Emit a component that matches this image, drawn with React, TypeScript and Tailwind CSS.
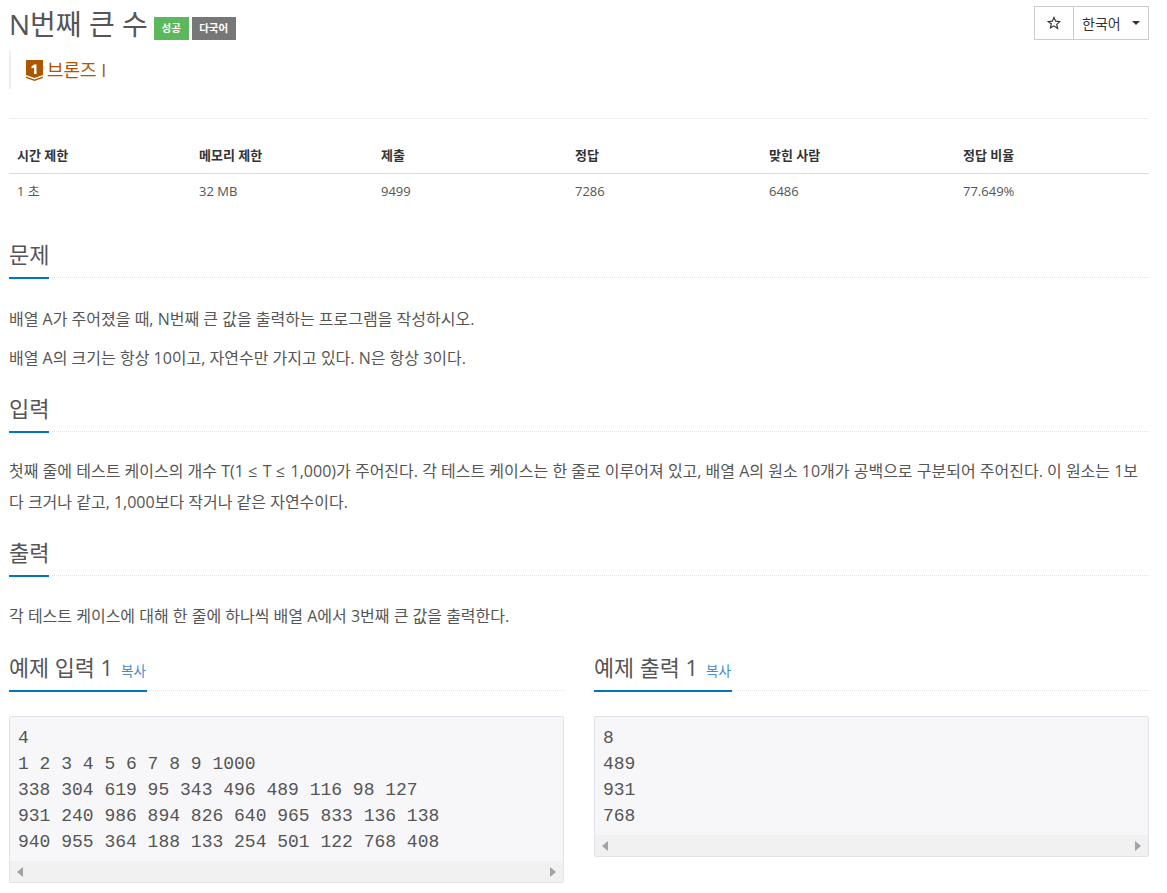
const sans = "font-['Open_Sans','Noto_Sans_CJK_KR',sans-serif]";

function Headline({ children }: { children: React.ReactNode }) {
  return (
    <div className="border-b border-dotted border-[#e5e5e5] h-[40px] flex">
      <h2 className="inline-block border-b-2 border-[#0076c0] h-[41px] text-[22px] leading-[32px] text-[#555] font-normal whitespace-nowrap">
        {children}
      </h2>
    </div>
  );
}

function Sample({ title, text, className }: { title: string; text: string; className?: string }) {
  return (
    <div className={className}>
      <div className="border-b border-dotted border-[#e5e5e5] h-[37px]">
        <div className="inline-flex items-baseline border-b-2 border-[#0076c0] h-[38px] pr-[1px] text-[#555] text-[21.8px] leading-[27px] whitespace-nowrap">
          {title}
          <span className="text-[13.5px] text-[#428bca] ml-[8px]">복사</span>
        </div>
      </div>
      <div className="mt-[25px] border border-[#e1e1e8] bg-[#f7f7f9] rounded-[2px]">
        <pre className="font-['Liberation_Mono',monospace] text-[18px] leading-[26px] text-[#555] px-[8px] pt-[8px] pb-[6px] whitespace-pre">
          {text}
        </pre>
        <div className="h-[21px] bg-[#f1f1f1] flex items-center justify-between px-[7px]">
          <svg width="6" height="10" viewBox="0 0 6 10"><path d="M6 0v10L0 5z" fill="#a3a3a3" /></svg>
          <svg width="6" height="10" viewBox="0 0 6 10"><path d="M0 0v10l6-5z" fill="#a3a3a3" /></svg>
        </div>
      </div>
    </div>
  );
}

export default function App() {
  const heads = [
    ["시간 제한", "w-[182px]"],
    ["메모리 제한", "w-[182px]"],
    ["제출", "w-[194px]"],
    ["정답", "w-[194px]"],
    ["맞힌 사람", "w-[194px]"],
    ["정답 비율", "flex-1"],
  ];
  const vals = ["1 초", "32 MB", "9499", "7286", "6486", "77.649%"];
  return (
    <div className={`${sans} bg-white min-h-[893px] pl-[9px] pr-[18px] text-[16px] text-[#555] overflow-hidden`}>
      <div className="flex items-start justify-between pt-[6px] h-[51px]">
        <div className="flex items-center">
          <span className="text-[28px] leading-[36px] text-[#555]">N번째 큰 수</span>
          <span className="ml-[6px] mt-[9px] w-[35px] h-[23px] flex items-center justify-center bg-[#5cb85c] text-white text-[10.5px] font-bold">성공</span>
          <span className="ml-[3px] mt-[9px] w-[44px] h-[23px] flex items-center justify-center bg-[#777] text-white text-[10.5px] font-bold">다국어</span>
        </div>
        <div className="flex h-[34px] border border-[#ccc] text-[14px] text-[#333]">
          <div className="w-[39px] flex items-center justify-center border-r border-[#ccc]">
            <svg width="14" height="14" viewBox="0 0 24 24" fill="none" stroke="#333" strokeWidth="2"><path d="M12 2.5l2.9 6.4 7 .8-5.2 4.7 1.400 6.900L12 16.900l-6.100 3.400 1.400-6.900L2.100 9.700l7-.8z" /></svg>
          </div>
          <div className="w-[74px] flex items-center pl-[8px]">
            한국어
            <span className="ml-[11px] w-0 h-0 border-x-[4px] border-x-transparent border-t-[4px] border-t-[#333]" />
          </div>
        </div>
      </div>

      <div className="border-l-[2px] border-[#eee] h-[38px] flex items-center pl-[15px]">
        <svg width="17" height="21" viewBox="0 0 17 21" className="mr-[4px]">
          <path d="M0 0h17v15L8.500 18 0 15z" fill="#ad5600" />
          <path d="M0 16.500L8.500 19.500 17 16.500V18L8.500 21 0 18z" fill="#ad5600" />
          <path d="M5.500 6.500L8 4.500h2.500V14H8V7.500L5.500 8.500z" fill="#fff" />
        </svg>
        <span className="text-[#ad5600] text-[18px]">브론즈 I</span>
      </div>

      <div className="mt-[29px] border-t border-[#eee]">
        <div className="flex h-[55px] items-end pb-[8px] border-b border-[#ddd] font-bold text-[13px] text-[#333]">
          {heads.map(([h, w]) => (
            <div key={h} className={`${w} pl-[8px] whitespace-nowrap`}>{h}</div>
          ))}
        </div>
        <div className="flex h-[36px] items-center text-[13px] text-[#555]">
          {vals.map((v, i) => (
            <div key={v} className={`${heads[i][1]} pl-[8px]`}>{v}</div>
          ))}
        </div>
      </div>

      <section className="mt-[28px]">
        <Headline>문제</Headline>
        <p className="mt-[30px] leading-[22px]">배열 A가 주어졌을 때, N번째 큰 값을 출력하는 프로그램을 작성하시오.</p>
        <p className="mt-[17px] leading-[22px]">배열 A의 크기는 항상 10이고, 자연수만 가지고 있다. N은 항상 3이다.</p>
      </section>

      <section className="mt-[23px]">
        <Headline>입력</Headline>
        <p className="mt-[24px] leading-[31px]">
          첫째 줄에 테스트 케이스의 개수 T(1 <span className="tracking-[1.5px]">≤</span> T <span className="tracking-[1.5px]">≤</span> 1,000)가 주어진다. 각 테스트 케이스는 한 줄로 이루어져 있고, 배열 A의 원소 10개가 공백으로 구분되어 주어진다. 이 원소는 1보다 크거나 같고, 1,000보다 작거나 같은 자연수이다.
        </p>
      </section>

      <section className="mt-[18px]">
        <Headline>출력</Headline>
        <p className="mt-[29px] leading-[22px]">각 테스트 케이스에 대해 한 줄에 하나씩 배열 A에서 3번째 큰 값을 출력한다.</p>
      </section>

      <div className="mt-[27px] flex items-start gap-[30px]">
        <Sample
          className="w-[555px]"
          title="예제 입력 1"
          text={"4\n1 2 3 4 5 6 7 8 9 1000\n338 304 619 95 343 496 489 116 98 127\n931 240 986 894 826 640 965 833 136 138\n940 955 364 188 133 254 501 122 768 408"}
        />
        <Sample className="w-[555px]" title="예제 출력 1" text={"8\n489\n931\n768"} />
      </div>
    </div>
  );
}
